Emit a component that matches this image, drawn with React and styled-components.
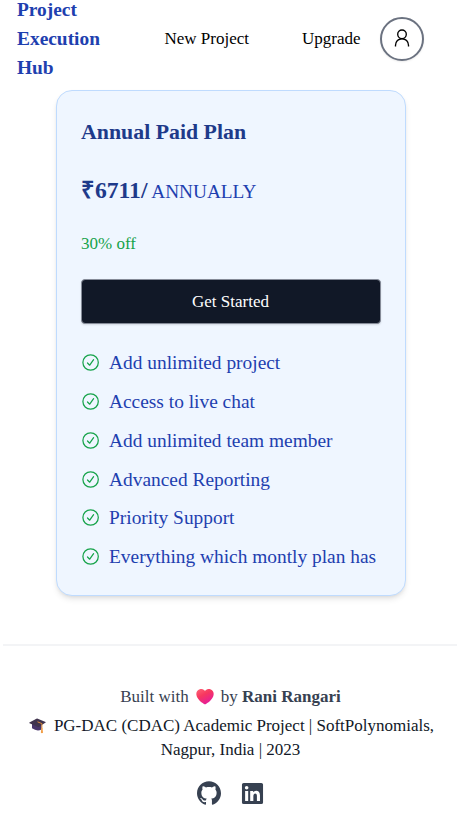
import React from "react";
import styled, { createGlobalStyle } from "styled-components";

const GlobalStyle = createGlobalStyle`
  * { box-sizing: border-box; }
  html, body { margin: 0; background: #fff; overflow: hidden; }
  body { font-family: "Liberation Serif", "Times New Roman", serif; font-size: 17px; color: #111827; }
  p, h1, h2, ul { margin: 0; padding: 0; }
`;

const Page = styled.div`
  width: 459px;
  height: 814px;
  overflow: hidden;
  display: flex;
  flex-direction: column;
`;

const Header = styled.header`
  height: 77px;
  flex: none;
  display: flex;
  align-items: center;
  padding: 0 35px 0 17px;
`;

const Brand = styled.h1`
  width: 147.5px;
  padding-right: 50px;
  font-size: 19.4px;
  line-height: 29px;
  font-weight: 700;
  color: #1e40af;
`;

const Nav = styled.nav`
  flex: 1;
  display: flex;
  align-items: center;
`;

const NavLink = styled.a`
  color: #000;
  line-height: 24px;
  white-space: nowrap;
  margin-right: ${(p) => p.$gap}px;
`;

const Avatar = styled.button`
  width: 44px;
  height: 44px;
  flex: none;
  margin-left: auto;
  padding: 0;
  display: grid;
  place-items: center;
  border: 2px solid #6b7280;
  border-radius: 50%;
  background: #fff;
  box-shadow: 0 1px 2px rgba(0, 0, 0, 0.08);
`;

const Card = styled.section`
  width: 350px;
  height: 506px;
  flex: none;
  margin: 13px 0 0 56px;
  padding: 27px 24px 0;
  border: 1px solid #bfdbfe;
  border-radius: 16px;
  background: #eff6ff;
  box-shadow: 0 4px 6px -1px rgba(0, 0, 0, 0.1), 0 2px 4px -2px rgba(0, 0, 0, 0.1);
`;

const PlanName = styled.h2`
  font-size: 21.85px;
  line-height: 29px;
  color: #1e3a8a;
`;

const Price = styled.p`
  margin-top: 27px;
  line-height: 32px;
  color: #1e40af;
  font-size: 19.3px;
  white-space: nowrap;
`;

const Amount = styled.strong`
  font-size: 23.6px;
  color: #1e3a8a;
`;

const Discount = styled.p`
  margin-top: 24px;
  line-height: 24px;
  color: #16a34a;
`;

const StartButton = styled.button`
  display: block;
  width: 300px;
  height: 45px;
  margin-top: 23px;
  padding: 0 1px 0 0;
  border: 1px solid #858b98;
  border-radius: 4px;
  background: #111827;
  color: #fff;
  font: inherit;
  box-shadow: 0 1px 2px rgba(0, 0, 0, 0.12);
`;

const Features = styled.ul`
  list-style: none;
  margin-top: 20px;
`;

const Feature = styled.li`
  display: flex;
  align-items: center;
  gap: 9px;
  height: 38.75px;
  font-size: 19.4px;
  color: #1e40af;
  white-space: nowrap;
  svg { color: #16a34a; margin-bottom: 1px; }
`;

const Footer = styled.footer`
  flex: 1;
  margin: 48px 2px 0 3px;
  padding-top: 39px;
  border-top: 2px solid #f3f4f6;
  display: flex;
  flex-direction: column;
  align-items: center;
`;

const Credit = styled.p`
  display: flex;
  align-items: center;
  margin-left: 1px;
  line-height: 24px;
  color: #374151;
  white-space: pre;
`;

const School = styled.p`
  margin-top: 5px;
  margin-left: 1px;
  line-height: 24px;
  text-align: center;
  color: #111827;
  white-space: nowrap;
`;

const CapSlot = styled.span`
  display: inline-block;
  width: 25px;
  height: 18px;
  margin-left: 2px;
  text-align: left;
  vertical-align: -4px;
`;

const HeartSlot = styled.span`
  display: flex;
  width: 32px;
  justify-content: center;
`;

const Socials = styled.div`
  display: flex;
  align-items: center;
  gap: 20px;
  margin: 19px 0 0 1px;
  color: #374151;
  svg { display: block; }
`;

const UserIcon = () => (
  <svg width="24" height="24" viewBox="0 0 24 24" fill="none" stroke="#000" strokeWidth="1.35">
    <circle cx="12" cy="7.3" r="4.3" />
    <path d="M5.500 19.600v-1.300c0-3.800 2.900-6.600 6.500-6.600s6.500 2.800 6.500 6.600v1.300" />
  </svg>
);

const CheckIcon = () => (
  <svg width="19" height="19" viewBox="0 0 19 19" fill="none" stroke="currentColor" strokeWidth="1.25" strokeLinecap="round" strokeLinejoin="round">
    <circle cx="9.6" cy="9.5" r="7.700" />
    <path d="M6.500 10l2.200 2.200 3.900-5.500" />
  </svg>
);

const HeartIcon = () => (
  <svg width="18" height="16" viewBox="0 0 18 16">
    <defs>
      <linearGradient id="heart" x1="0" y1="0" x2="0.6" y2="1">
        <stop offset="0" stopColor="#ff6577" />
        <stop offset="0.45" stopColor="#f7385f" />
        <stop offset="1" stopColor="#e51c9b" />
      </linearGradient>
    </defs>
    <path d="M9 2.100C7.700.3 5.700-.1 3.700.2 1.300.8 0 3.100.4 5.800c.5 3.900 4.200 7.100 7.600 9.200q1 .6 2 0c3.400-2.100 7.100-5.300 7.600-9.200.4-2.700-.9-5-3.300-5.600-2-.3-4 .1-5.300 1.900z" fill="url(#heart)" />
  </svg>
);

const CapIcon = () => (
  <svg width="18" height="18" viewBox="0 0 18 18">
    <path d="M3 7v4.300q5 3.500 9.500 1.200V7z" fill="#49366b" />
    <path d="M.4 5.500L7.400 1.700q.7-.3 1.400 0l7.800 3.200q.5.300 0 .7L10.200 9.700q-.8.400-1.600 0L.5 6.200q-.5-.4-.1-.7z" fill="#40344e" />
    <path d="M8.500 4.800l4.400 1.800v5" fill="none" stroke="#df8a38" strokeWidth="1" strokeLinejoin="round" />
    <path d="M12.300 11h1.200l.5 4.800q-1.200.7-2.100 0z" fill="#f29c43" />
  </svg>
);

const GithubIcon = () => (
  <svg width="24" height="24" viewBox="0 0 24 24" fill="currentColor">
    <path d="M12 .297c-6.630 0-12 5.373-12 12 0 5.303 3.438 9.800 8.205 11.385.6.113.82-.258.82-.577 0-.285-.01-1.040-.015-2.040-3.338.724-4.042-1.610-4.042-1.610C4.422 18.070 3.633 17.700 3.633 17.700c-1.087-.744.084-.729.084-.729 1.205.084 1.838 1.236 1.838 1.236 1.070 1.835 2.809 1.305 3.495.998.108-.776.417-1.305.760-1.605-2.665-.300-5.466-1.332-5.466-5.930 0-1.310.465-2.380 1.235-3.220-.135-.303-.540-1.523.105-3.176 0 0 1.005-.322 3.300 1.230.960-.267 1.980-.399 3-.405 1.020.006 2.040.138 3 .405 2.280-1.552 3.285-1.230 3.285-1.230.645 1.653.240 2.873.120 3.176.765.840 1.230 1.910 1.230 3.220 0 4.610-2.805 5.625-5.475 5.920.420.360.810 1.096.810 2.220 0 1.606-.015 2.896-.015 3.286 0 .315.210.690.825.570C20.565 22.092 24 17.592 24 12.297c0-6.627-5.373-12-12-12" />
  </svg>
);

const LinkedinIcon = () => (
  <svg width="23" height="23" viewBox="0 0 24 24" fill="currentColor">
    <path fillRule="evenodd" d="M2.800 1h18.400Q23 1 23 2.700v18.600Q23 23 21.200 23H2.800Q1 23 1 21.300V2.700Q1 1 2.800 1zM4.300 9.300v10.400h3.200V9.300zM5.900 4.100a1.900 1.900 0 100 3.800 1.900 1.900 0 000-3.800zM9.600 9.300v10.400h3.300v-5.200c0-3.400 3.700-3.500 3.700-.1v5.300h3.200v-6c0-5.200-5.100-5.800-7.100-2.900V9.300z" />
  </svg>
);

const features = [
  "Add unlimited project",
  "Access to live chat",
  "Add unlimited team member",
  "Advanced Reporting",
  "Priority Support",
  "Everything which montly plan has",
];

export default function App() {
  return (
    <Page>
      <GlobalStyle />
      <Header>
        <Brand>Project Execution Hub</Brand>
        <Nav>
          <NavLink $gap={53}>New Project</NavLink>
          <NavLink $gap={0}>Upgrade</NavLink>
          <Avatar aria-label="Account"><UserIcon /></Avatar>
        </Nav>
      </Header>
      <Card>
        <PlanName>Annual Paid Plan</PlanName>
        <Price><Amount>₹6711/</Amount> ANNUALLY</Price>
        <Discount>30% off</Discount>
        <StartButton>Get Started</StartButton>
        <Features>
          {features.map((text) => (
            <Feature key={text}><CheckIcon />{text}</Feature>
          ))}
        </Features>
      </Card>
      <Footer>
        <Credit>Built with<HeartSlot><HeartIcon /></HeartSlot>by <strong>Rani Rangari</strong></Credit>
        <School>
          <CapSlot><CapIcon /></CapSlot>PG-DAC (CDAC) Academic Project | SoftPolynomials,<br />
          Nagpur, India | 2023
        </School>
        <Socials><GithubIcon /><LinkedinIcon /></Socials>
      </Footer>
    </Page>
  );
}
